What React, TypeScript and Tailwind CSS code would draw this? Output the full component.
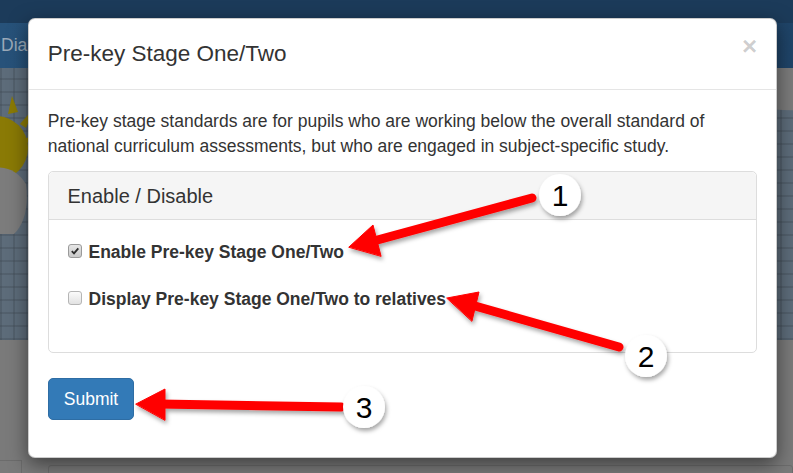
import React from "react";

function Checkbox({ checked }: { checked?: boolean }) {
  return (
    <span
      className={
        "flex h-[14px] w-[14px] shrink-0 items-center justify-center rounded-[3px] border " +
        (checked
          ? "border-[#9a9a9a] bg-linear-to-b from-[#e6e6e6] to-[#c9c9c9]"
          : "border-[#b5b5b5] bg-linear-to-b from-[#fbfbfb] to-[#e2e2e2]")
      }
    >
      {checked && (
        <svg width="10" height="10" viewBox="0 0 10 10">
          <path d="M1.8 5.2 L4 7.4 L8.3 2.3" fill="none" stroke="#2b2b2b" strokeWidth="1.8" />
        </svg>
      )}
    </span>
  );
}

function Annotations() {
  return (
    <svg className="pointer-events-none absolute inset-0" width="793" height="473" viewBox="0 0 793 473">
      <defs>
        <filter id="sh" x="-20%" y="-20%" width="140%" height="160%">
          <feDropShadow dx="1.5" dy="3" stdDeviation="2" floodColor="#000" floodOpacity="0.35" />
        </filter>
      </defs>
      <g filter="url(#sh)" fill="#ff0000" stroke="#ff0000" strokeLinecap="round" strokeLinejoin="round">
        {/* arrow 1 */}
        <line x1="532" y1="198" x2="370" y2="242" strokeWidth="9" />
        <polygon points="349,247 373,225 381,256" strokeWidth="1" />
        {/* arrow 2 */}
        <line x1="619" y1="347" x2="468" y2="304" strokeWidth="9" />
        <polygon points="447,298 479,292 472,321" strokeWidth="1" />
        {/* arrow 3 */}
        <line x1="341" y1="407" x2="160" y2="404" strokeWidth="9" />
        <polygon points="136,404 165,389 165,420" strokeWidth="1" />
      </g>
      <g filter="url(#sh)" fill="#fff">
        <circle cx="560" cy="195" r="21" />
        <circle cx="646" cy="356" r="21" />
        <circle cx="364" cy="407" r="21" />
      </g>
      <g fontFamily="'Liberation Sans', Arial, sans-serif" fontSize="30" fill="#000" textAnchor="middle">
        <text x="560" y="206">1</text>
        <text x="646" y="367">2</text>
        <text x="364" y="418">3</text>
      </g>
    </svg>
  );
}

export default function App() {
  return (
    <div className="relative h-[473px] w-[793px] overflow-hidden bg-[#7a7a7a] font-['Liberation_Sans',Arial,sans-serif]">
      {/* page behind the backdrop */}
      <div className="h-[23px] bg-[#1c3b5a]" />
      <div className="flex h-[45px] items-center bg-linear-to-r from-[#27527a] to-[#1f4468] text-[17.5px] text-[#9aa9b8]">
        <span className="pl-[1px]">Diary</span>
      </div>
      <div className="relative h-[272px] bg-[#5d6c7a] bg-[repeating-linear-gradient(0deg,rgba(60,70,80,.3)_0_2px,transparent_2px_13px),repeating-linear-gradient(90deg,rgba(60,70,80,.3)_0_2px,transparent_2px_13px)]">
        <svg className="absolute left-0 top-0" width="793" height="272" viewBox="0 0 793 272">
          <g fill="#8a7a05">
            <circle cx="-4" cy="80" r="32" />
            <polygon points="8,46 12,28 18,44" />
            <polygon points="20,56 34,40 26,60" />
            <polygon points="22,72 36,66 24,78" />
          </g>
          <path d="M-10 100 Q14 96 26 116 Q30 150 14 166 L-10 166 Z" fill="#7c7c7c" />
          <path d="M700 0 L800 0 L800 42 Q760 44 740 30 Q716 14 700 0 Z" fill="#7b7b7b" />
        </svg>
      </div>
      <div className="mt-[120px] flex">
        <div className="h-[20px] w-[22px] border-r border-t border-[#6c6c6c]" />
        <div className="ml-[26px] mt-[5px] h-[20px] flex-1 rounded-t-[3px] border border-[#6c6c6c]" />
      </div>

      {/* modal */}
      <div className="absolute left-[28px] top-[18px] w-[749px] rounded-[7px] border border-black/20 bg-white text-[#333] shadow-[0_6px_19px_rgba(0,0,0,0.5)]">
        <div className="flex items-start justify-between border-b border-[#e5e5e5] px-[18.75px] py-[18.75px]">
          <h4 className="text-[22.5px] leading-[32px]">Pre-key Stage One/Two</h4>
          <span className="mt-[-5px] text-[26px] font-bold leading-none text-black/20">×</span>
        </div>
        <div className="px-[18.75px] pb-[37px] pt-[19px] text-[17.5px] leading-[25px]">
          <p className="mb-[12.5px]">
            Pre-key stage standards are for pupils who are working below the overall standard of national curriculum
            assessments, but who are engaged in subject-specific study.
          </p>
          <div className="mb-[25px] rounded-[5px] border border-[#ddd]">
            <div className="rounded-t-[5px] border-b border-[#ddd] bg-[#f5f5f5] px-[18.75px] py-[12.5px] text-[20px] leading-[22px]">
              Enable / Disable
            </div>
            <div className="flex flex-col gap-[22px] px-[18.75px] pb-[40px] pt-[20px]">
              <label className="flex items-center font-bold">
                <span className="mt-[-3px]">
                  <Checkbox checked />
                </span>
                <span className="ml-[7px]">Enable Pre-key Stage One/Two</span>
              </label>
              <label className="flex items-center font-bold">
                <span className="mt-[-3px]">
                  <Checkbox />
                </span>
                <span className="ml-[7px]">Display Pre-key Stage One/Two to relatives</span>
              </label>
            </div>
          </div>
          <button className="rounded-[5px] border border-[#2e6da4] bg-[#337ab7] px-[15px] py-[7.5px] text-white">
            Submit
          </button>
        </div>
      </div>

      <Annotations />
    </div>
  );
}
